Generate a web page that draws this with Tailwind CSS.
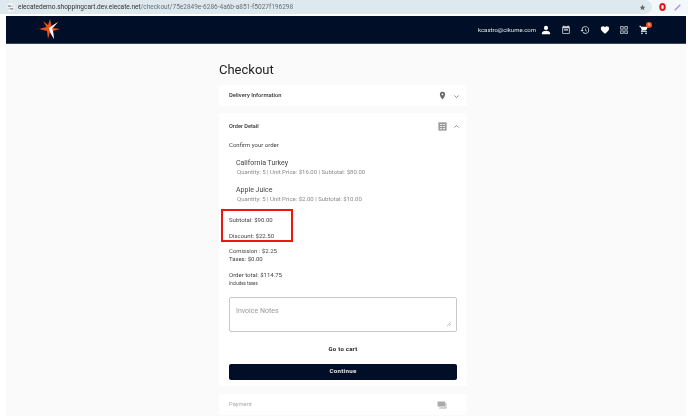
<!DOCTYPE html>
<html lang="en">
<head>
  <meta charset="UTF-8">
  <title>Checkout</title>
  <script src="https://cdn.jsdelivr.net/npm/@tailwindcss/browser@4"></script>
</head>
<body class="bg-white h-[416px] w-[688px] overflow-hidden font-['Roboto',sans-serif]">
<div class="relative h-[416px] blur-[0.4px]">

  <!-- Browser bar -->
  <div class="h-[14px] flex items-center bg-[#f3f8fb]">
    <div class="w-[652px] h-[14px] flex items-center bg-[#dde8ef] rounded-r-full pl-[6px] pr-[6px]">
      <div class="w-[9px] h-[9px] mr-[3px] rounded-full bg-[#f0f5f8] flex items-center justify-center">
        <svg class="w-[7px] h-[7px]" viewBox="0 0 10 10" fill="none" stroke="#555" stroke-width="1.2"><path d="M1 3h5M8 3h1M1 7h1M4 7h5"/></svg>
      </div>
      <span class="text-[6.5px] leading-none text-[#2f3335] whitespace-nowrap">elecatedemo.shoppingcart.dev.elecate.net<span class="text-[#6a7074]">/checkout/75e2849e-6286-4a6b-a851-f5027f196298</span></span>
      <svg class="w-[7px] h-[7px] ml-auto" viewBox="0 0 24 24" fill="#666"><path d="M12 2l3 7 7 .6-5.300 4.600 1.600 7L12 17l-6.300 3.800 1.600-7L2 9.600 9 9z"/></svg>
    </div>
    <svg class="w-[7px] h-[8px] ml-[7px]" viewBox="0 0 14 16" fill="none" stroke="#e8141c" stroke-width="4"><ellipse cx="7" cy="8" rx="4.500" ry="6"/></svg>
    <svg class="w-[7px] h-[7px] ml-[8px]" viewBox="0 0 10 10" stroke="#b58ae6" stroke-width="2"><path d="M1 9L9 1"/></svg>
  </div>

  <div class="ml-[6px] mr-[2px] mt-[2px] h-[400px] bg-[#fafafa]">
    <!-- Header -->
    <header class="h-[28px] bg-[#000f27] flex items-center pl-[33px] pr-[37px] border-b border-[#3a4658]">
      <svg class="w-[21px] h-[21px]" viewBox="0 0 21 21">
        <path d="M11 0L12.500 7 19 3 14 9 21 10 14 12 15 20 11 13 9 20 8 12 0 10 7.500 8 4 2 9 6z" fill="#e8501c"/>
        <path d="M19 3L10 9 11 13 15 20 14 12 13 9.500z" fill="#ffffff"/>
      </svg>
      <span class="ml-auto text-[6px] text-[#e2e5ea]">kcastro@cikume.com</span>
      <div class="flex items-center ml-[5px] gap-[9.600px]">
        <svg class="w-[10px] h-[10px]" viewBox="0 0 24 24" fill="#fff"><path d="M12 12a5 5 0 100-10 5 5 0 000 10zm0 2c-4 0-10 2-10 6v2h20v-2c0-4-6-6-10-6z"/></svg>
        <svg class="w-[10px] h-[10px]" viewBox="0 0 24 24" fill="#d8dce2"><path d="M19 3h-1V1h-2v2H8V1H6v2H5a2 2 0 00-2 2v14a2 2 0 002 2h14a2 2 0 002-2V5a2 2 0 00-2-2zm0 16H5V8h14zM7 10h10v3H7z"/></svg>
        <svg class="w-[10px] h-[10px]" viewBox="0 0 24 24" fill="#d8dce2"><path d="M13 3a9 9 0 00-9 9H1l4 4 4-4H6a7 7 0 117 7 7 7 0 01-5-2l-1.400 1.400A9 9 0 1013 3zm-1 5v5l4.300 2.500.7-1.200-3.500-2.100V8z"/></svg>
        <svg class="w-[10px] h-[10px]" viewBox="0 0 24 24" fill="#fff"><path d="M12 21l-1.500-1.300C5.400 15.100 2 12 2 8.200 2 5.100 4.400 3 7.500 3c1.700 0 3.400.8 4.500 2.100C13.100 3.800 14.800 3 16.500 3 19.600 3 22 5.100 22 8.200c0 3.800-3.400 6.900-8.500 11.500z"/></svg>
        <svg class="w-[10px] h-[10px]" viewBox="0 0 24 24" fill="#d8dce2"><path d="M3 3h8v8H3zm2 2v4h4V5zm8-2h8v8h-8zm2 2v4h4V5zM3 13h8v8H3zm2 2v4h4v-4zm8-2h8v8h-8zm2 2v4h4v-4z"/></svg>
        <div class="relative">
          <svg class="w-[10px] h-[10px] block" viewBox="0 0 24 24" fill="#fff"><path d="M7 18a2 2 0 100 4 2 2 0 000-4zm10 0a2 2 0 100 4 2 2 0 000-4zM1 2v2h2l3.600 7.600L5.200 14c-.7 1.300.2 3 1.800 3h12v-2H7.400l1.100-2h7.500c.7 0 1.400-.4 1.700-1L21.300 5c.4-.7-.1-1-.9-1H5.200l-.9-2z"/></svg>
          <span class="absolute -top-[3px] -right-[3px] w-[6px] h-[6px] rounded-full bg-[#f4511e] text-white text-[4px] leading-[6px] text-center">5</span>
        </div>
      </div>
    </header>

    <!-- Checkout column -->
    <main class="w-[248px] ml-[213px] text-[#333]">
      <h1 class="text-[13px] leading-[15px] mt-[18px] mb-[8px] text-[#212121]">Checkout</h1>

      <section class="h-[21px] bg-white rounded-[2px] flex items-center pl-[10px] pr-[7px] mb-[7px]">
        <span class="text-[5.800px] font-medium text-[#333]">Delivery Information</span>
        <svg class="w-[9px] h-[9px] ml-auto" viewBox="0 0 24 24" fill="#666"><path d="M12 2a7 7 0 00-7 7c0 5.200 7 13 7 13s7-7.800 7-13a7 7 0 00-7-7zm0 9.500a2.500 2.500 0 110-5 2.500 2.500 0 010 5z"/></svg>
        <svg class="w-[7px] h-[7px] ml-[6px] mt-[1px]" viewBox="0 0 10 10" fill="none" stroke="#666" stroke-width="1"><path d="M2 3.500l3 3 3-3"/></svg>
      </section>

      <section class="h-[273px] bg-white rounded-[2px] pl-[10px] pr-[10px] mb-[8px] text-[6px] text-[#444]">
        <div class="flex items-center h-[26px] -mr-[3px]">
          <span class="text-[5.600px] font-medium text-[#333]">Order Detail</span>
          <svg class="w-[9px] h-[9px] ml-auto" viewBox="0 0 24 24"><path d="M1 1h22v22H1z" fill="#999"/><path d="M5 5h6v3H5zm8 0h6v3h-6zm-8 5.500h6v3H5zm8 0h6v3h-6zM5 16h6v3H5zm8 0h6v3h-6z" fill="#e4e4e4"/></svg>
          <svg class="w-[7px] h-[7px] ml-[6px]" viewBox="0 0 10 10" fill="none" stroke="#666" stroke-width="1"><path d="M2 6.500l3-3 3 3"/></svg>
        </div>
        <p class="mt-[2px] leading-[8px]">Confirm your order</p>
        <div class="ml-[7px] mt-[10px]">
          <p class="text-[7px] leading-[9px] text-[#444]">California Turkey</p>
          <p class="ml-[1px] leading-[8px] text-[#8a8a8a]">Quantity: 5 | Unit Price: $16.00 | Subtotal: $80.00</p>
          <p class="text-[7px] leading-[9px] text-[#444] mt-[10px]">Apple Juice</p>
          <p class="ml-[1px] leading-[8px] text-[#8a8a8a]">Quantity: 5 | Unit Price: $2.00 | Subtotal: $10.00</p>
        </div>
        <p class="mt-[13px] leading-[8px]">Subtotal: $90.00</p>
        <p class="mt-[8px] leading-[8px]">Discount: $22.50</p>
        <p class="mt-[7px] leading-[8px]">Comission : $2.25</p>
        <p class="leading-[8px]">Taxes: $0.00</p>
        <p class="mt-[8px] leading-[8px]">Order total: $114.75</p>
        <p class="mt-[2px] text-[4.500px] leading-[6px]">Includes taxes</p>
        <div class="relative mt-[10px] h-[35px] border border-[#c8c8c8] rounded-[2px] px-[6px] pt-[9px] text-[7px] leading-[9px] text-[#999]">
          Invoice Notes
          <svg class="absolute right-[5px] bottom-[5px] w-[4px] h-[4px]" viewBox="0 0 4 4" stroke="#888" stroke-width=".5"><path d="M0 4L4 0M2 4l2-2"/></svg>
        </div>
        <p class="mt-[13px] text-center text-[6px] leading-[7px] font-bold tracking-[.04em] text-[#222]">Go to cart</p>
        <button class="block w-full mt-[12px] h-[16px] bg-[#000f27] rounded-[2px] text-[6.200px] font-bold tracking-[.04em] text-[#e6e6e6]">Continue</button>
      </section>

      <section class="h-[21px] bg-white rounded-[2px] flex items-center pl-[10px] pr-[20px] text-[5.800px] text-[#aaa]">
        <span>Payment</span>
        <svg class="w-[10px] h-[8px] ml-auto" viewBox="0 0 24 20" fill="#aaa"><path d="M1 1h19v13H1zm22 4v14H5v-3h16V5z"/></svg>
      </section>
    </main>
  </div>

  <!-- Annotation -->
  <div class="absolute left-[221px] top-[209px] w-[72px] h-[33px] border-2 border-[#f0140f]"></div>
</div>
</body>
</html>
